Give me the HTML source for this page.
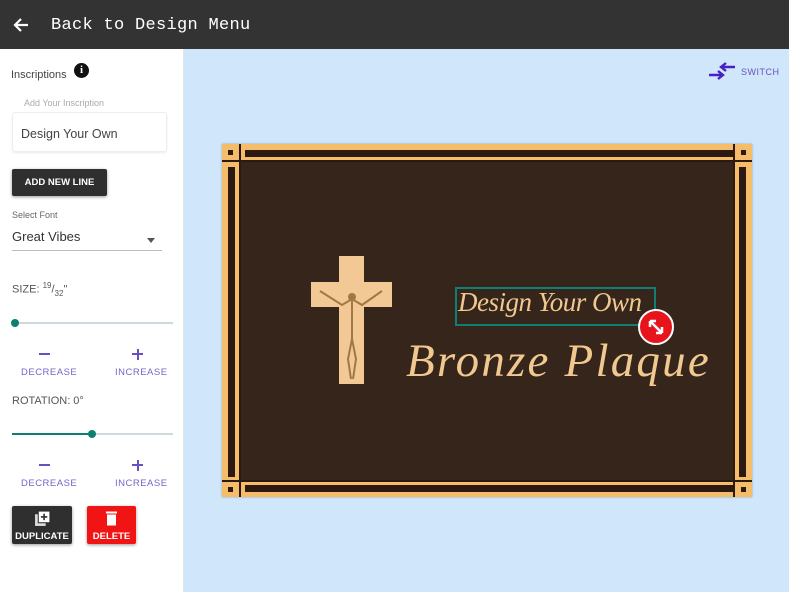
<!DOCTYPE html>
<html><head><style>
*{box-sizing:border-box;margin:0;padding:0}
body{width:789px;height:592px;overflow:hidden;font-family:"Liberation Sans",sans-serif;background:#cfe6fb;position:relative}
.top{position:absolute;left:0;top:0;width:789px;height:49px;background:#333;color:#fff}
.top span{position:absolute;left:51px;top:16px;font-family:"Liberation Mono",monospace;font-size:17px;letter-spacing:.3px}
.side{position:absolute;left:0;top:49px;width:184px;height:543px;background:#fff;border-right:1px solid #e4e4e4}
.a{position:absolute}
.lbl{color:#444;font-size:11px}
.btn{position:absolute;color:#fff;font-weight:bold;font-size:9.5px;text-align:center;box-shadow:0 1px 3px rgba(0,0,0,.4);border-radius:2px}
.pur{color:#7a63c6;font-size:9.5px;letter-spacing:.5px}
.g{background:#f5bd6a}
.d{background:#2c1a12}
</style></head><body>
<div class="top">
<svg class="a" style="left:13px;top:17px" width="16" height="16" viewBox="0 0 16 16"><path d="M15 8H3M8 2L2 8l6 6" stroke="#fff" stroke-width="2.2" fill="none"/></svg>
<span>Back to Design Menu</span></div>
<div class="side">
<div class="a lbl" style="left:11px;top:20px">Inscriptions</div>
<div class="a" style="left:74px;top:14px;width:15px;height:15px;border-radius:50%;background:#111;color:#fff;font-size:11px;font-weight:bold;text-align:center;line-height:15px;font-family:'Liberation Serif',serif">i</div>
<div class="a" style="left:24px;top:49px;color:#aaa;font-size:9px">Add Your Inscription</div>
<div class="a" style="left:12px;top:63px;width:155px;height:40px;border:1px solid #eee;border-radius:3px;box-shadow:0 1px 2px rgba(0,0,0,.08)"></div>
<div class="a" style="left:21px;top:78px;color:#444;font-size:12.5px">Design Your Own</div>
<div class="btn" style="left:12px;top:120px;width:95px;height:27px;background:#2f2f2f;line-height:27px">ADD NEW LINE</div>
<div class="a" style="left:12px;top:161px;color:#666;font-size:9px">Select Font</div>
<div class="a" style="left:12px;top:180px;color:#333;font-size:13px">Great Vibes</div>
<div class="a" style="left:147px;top:189px;width:0;height:0;border-left:4px solid transparent;border-right:4px solid transparent;border-top:5px solid #555"></div>
<div class="a" style="left:12px;top:201px;width:150px;height:1px;background:#bbb"></div>
<div class="a lbl" style="left:12px;top:232px;color:#555">SIZE: <sup style="font-size:8px">19</sup>/<sub style="font-size:8px">32</sub>"</div>
<div class="a" style="left:12px;top:273px;width:161px;height:2px;background:#cfd8dc"></div>
<div class="a" style="left:11px;top:270px;width:8px;height:8px;border-radius:50%;background:#0b8070"></div>
<div class="a" style="left:39px;top:304px;width:11px;height:2px;background:#6a4fc0"></div>
<div class="a" style="left:132px;top:304px;width:11px;height:2px;background:#6a4fc0"></div>
<div class="a" style="left:136.5px;top:299.5px;width:2px;height:11px;background:#6a4fc0"></div>
<div class="a pur" style="left:21px;top:318px">DECREASE</div>
<div class="a pur" style="left:115px;top:318px">INCREASE</div>
<div class="a lbl" style="left:12px;top:346px;color:#555">ROTATION: 0°</div>
<div class="a" style="left:12px;top:384px;width:161px;height:2px;background:#cfd8dc"></div>
<div class="a" style="left:12px;top:384px;width:80px;height:2px;background:#0b8070"></div>
<div class="a" style="left:88px;top:381px;width:8px;height:8px;border-radius:50%;background:#0b8070"></div>
<div class="a" style="left:39px;top:415px;width:11px;height:2px;background:#6a4fc0"></div>
<div class="a" style="left:132px;top:415px;width:11px;height:2px;background:#6a4fc0"></div>
<div class="a" style="left:136.5px;top:410.5px;width:2px;height:11px;background:#6a4fc0"></div>
<div class="a pur" style="left:21px;top:429px">DECREASE</div>
<div class="a pur" style="left:115px;top:429px">INCREASE</div>
<div class="btn" style="left:12px;top:457px;width:60px;height:38px;background:#2f2f2f;padding-top:25px">DUPLICATE
<svg class="a" style="left:22px;top:4px" width="17" height="17" viewBox="0 0 16 16"><rect x="1" y="4" width="10" height="11" fill="#ddd"/><rect x="4" y="1" width="11" height="11" fill="#fff" stroke="#2f2f2f"/><path d="M9.5 3.5v6M6.5 6.5h6" stroke="#2f2f2f" stroke-width="1.5"/></svg></div>
<div class="btn" style="left:87px;top:457px;width:49px;height:38px;background:#f01414;padding-top:25px">DELETE
<svg class="a" style="left:18px;top:4px" width="13" height="16" viewBox="0 0 13 15"><rect x="1" y="1" width="11" height="2" fill="#fff"/><rect x="2" y="4" width="9" height="11" fill="#fff"/></svg></div>
</div>
<svg class="a" style="left:708px;top:62px" width="28" height="18" viewBox="0 0 28 18"><path d="M27 5H14M18 1l-5 4 5 4M1 13h13M10 9l5 4-5 4" stroke="#4b1fc4" stroke-width="2.4" fill="none"/></svg>
<div class="a" style="left:741px;top:67px;color:#6a4fc0;font-size:9px;letter-spacing:.5px">SWITCH</div>
<div class="a g" style="left:222px;top:144px;width:530px;height:353px;box-shadow:0 0 2px rgba(0,0,0,.3)"></div>
<div class="a" style="left:240px;top:161px;width:494px;height:320px;background:#35251b"></div>
<div class="a d" style="left:245px;top:150px;width:488px;height:7px"></div>
<div class="a d" style="left:245px;top:485px;width:488px;height:7px"></div>
<div class="a d" style="left:228px;top:167px;width:7px;height:310px"></div>
<div class="a d" style="left:739px;top:167px;width:7px;height:310px"></div>
<div class="a d" style="left:239px;top:144px;width:2px;height:353px"></div>
<div class="a d" style="left:733px;top:144px;width:2px;height:353px"></div>
<div class="a d" style="left:222px;top:160px;width:530px;height:2px"></div>
<div class="a d" style="left:222px;top:480px;width:530px;height:2px"></div>
<div class="a d" style="left:228px;top:150px;width:5px;height:5px"></div>
<div class="a d" style="left:741px;top:150px;width:5px;height:5px"></div>
<div class="a d" style="left:228px;top:487px;width:5px;height:5px"></div>
<div class="a d" style="left:741px;top:487px;width:5px;height:5px"></div>
<div class="a" style="left:339px;top:256px;width:25px;height:128px;background:#f2c994"></div>
<div class="a" style="left:311px;top:282px;width:81px;height:25px;background:#f2c994"></div>
<svg class="a" style="left:318px;top:285px" width="68" height="95" viewBox="0 0 68 95"><path d="M2 6l22 14 10 -6 10 6 20-14M34 14v40l-4 20 3 20M34 54l4 20-3 20" stroke="#a07848" stroke-width="2" fill="none"/><circle cx="34" cy="12" r="4" fill="#a07848"/></svg>
<div class="a" style="left:455px;top:287px;width:201px;height:39px;border:2px solid #0f7e74"></div>
<div class="a" style="left:458px;top:287px;color:#f0c890;font-family:'Liberation Serif',serif;font-style:italic;font-size:27px;white-space:nowrap;letter-spacing:-0.5px">Design Your Own</div>
<div class="a" style="left:406px;top:334px;color:#f0c890;font-family:'Liberation Serif',serif;font-style:italic;font-size:47px;white-space:nowrap;letter-spacing:2.2px">Bronze Plaque</div>
<div class="a" style="left:638px;top:309px;width:36px;height:36px;border-radius:50%;background:#e8141c;border:2px solid #fff"></div>
<svg class="a" style="left:646px;top:317px" width="20" height="20" viewBox="0 0 20 20"><path d="M4 4l12 12M4 4v6M4 4h6M16 16v-6M16 16h-6" stroke="#fff" stroke-width="2.5" fill="none"/></svg>
</body></html>
